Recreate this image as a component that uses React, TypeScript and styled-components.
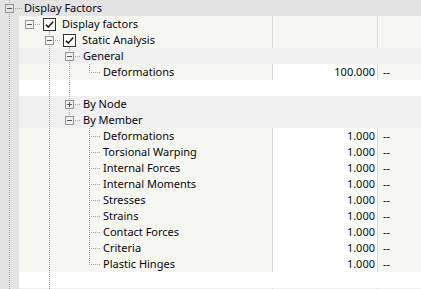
import React from 'react';
import styled, { createGlobalStyle, css } from 'styled-components';

type Variant = 'header' | 'group' | 'band' | 'blank' | 'data' | 'edge';

const DOT = '#a3a3a3';
const STRIP = '#e3e3e3';

const treeBg: Record<Variant, string> = {
  header: '#e3e3e3',
  group: '#f7f7f2',
  band: '#f0f0f0',
  blank: '#ffffff',
  data: '#f7f7f2',
  edge: '#f0f0f0',
};
const valueBg: Record<Variant, string> = {
  header: '#e3e3e3',
  group: '#f7f7f2',
  band: '#f0f0f0',
  blank: '#ffffff',
  data: '#ffffff',
  edge: '#f0f0f0',
};
const dividerBg: Record<Variant, string> = {
  header: '#e3e3e3',
  group: '#d9d9d9',
  band: '#f0f0f0',
  blank: '#ffffff',
  data: '#d9d9d9',
  edge: '#d9d9d9',
};

const vDots = css`
  background-image: linear-gradient(to bottom, ${DOT} 50%, transparent 50%);
  background-size: 1px 2px;
`;
const hDots = css`
  background-image: linear-gradient(to right, ${DOT} 50%, transparent 50%);
  background-size: 2px 1px;
`;

const Global = createGlobalStyle`
  html, body { margin: 0; padding: 0; background: #ffffff; }
  body { font-family: "Segoe UI", "Noto Sans", "Liberation Sans", sans-serif; }
`;

const Frame = styled.div`
  width: 421px;
  height: 289px;
  overflow: hidden;
  background: #ffffff;
  display: flex;
  flex-direction: column;
  font-size: 11px;
  color: #05050f;
`;

const Row = styled.div`
  display: grid;
  grid-template-columns: 272px 1px 104px 1px 43px;
  height: 16px;
  flex: none;
`;

const TreeCell = styled.div<{ $v: Variant }>`
  display: flex;
  align-items: stretch;
  background: ${(p) => treeBg[p.$v]};
  overflow: hidden;
`;

const Divider = styled.div<{ $v: Variant }>`
  background: ${(p) => dividerBg[p.$v]};
`;

const ValueCell = styled.div<{ $v: Variant }>`
  background: ${(p) => valueBg[p.$v]};
  text-align: right;
  padding-right: 2px;
  line-height: 16px;
  white-space: nowrap;
`;

const UnitCell = styled.div<{ $v: Variant }>`
  background: ${(p) => treeBg[p.$v]};
  padding-left: 5px;
  line-height: 16px;
  white-space: nowrap;
`;

const Guide = styled.span<{ $root?: boolean; $line: boolean }>`
  flex: none;
  position: relative;
  width: ${(p) => (p.$root ? 19 : 20)}px;
  background: ${(p) => (p.$root ? STRIP : 'transparent')};
  ${(p) =>
    p.$line &&
    css`
      &::before {
        content: '';
        position: absolute;
        top: 0;
        bottom: 0;
        left: ${p.$root ? 9 : 10}px;
        width: 1px;
        ${vDots}
      }
    `}
`;

const NodeCell = styled.span<{ $root?: boolean; $top?: boolean; $bottom?: boolean }>`
  flex: none;
  position: relative;
  box-sizing: border-box;
  width: 24px;
  display: flex;
  align-items: flex-start;
  padding-left: ${(p) => (p.$root ? 5 : 6)}px;
  &::before {
    content: '';
    position: absolute;
    left: ${(p) => (p.$root ? 9 : 10)}px;
    width: 1px;
    top: ${(p) => (p.$top ? 0 : 8)}px;
    bottom: ${(p) => (p.$bottom ? 0 : 8)}px;
    ${vDots}
  }
  &::after {
    content: '';
    position: absolute;
    top: 8px;
    left: ${(p) => (p.$root ? 9 : 10)}px;
    right: 2px;
    height: 1px;
    ${hDots}
  }
`;

const Expander = styled.span<{ $open: boolean; $bg: string }>`
  position: relative;
  z-index: 1;
  box-sizing: border-box;
  width: 9px;
  height: 9px;
  margin-top: 4px;
  border: 1px solid #939393;
  background: ${(p) => p.$bg};
  &::before {
    content: '';
    position: absolute;
    left: 1px;
    top: 3px;
    width: 5px;
    height: 1px;
    background: #5a5a5a;
  }
  ${(p) =>
    !p.$open &&
    css`
      &::after {
        content: '';
        position: absolute;
        left: 3px;
        top: 1px;
        width: 1px;
        height: 5px;
        background: #5a5a5a;
      }
    `}
`;

const Check = styled.span<{ $stem?: boolean }>`
  flex: none;
  position: relative;
  box-sizing: border-box;
  width: 13px;
  height: 13px;
  margin: 2px 6px 0 0;
  border: 1px solid #333333;
  background: #ffffff;
  display: flex;
  align-items: center;
  justify-content: center;
  ${(p) =>
    p.$stem &&
    css`
      &::after {
        content: '';
        position: absolute;
        left: 5px;
        top: 12px;
        width: 1px;
        height: 1px;
        ${vDots}
      }
    `}
`;

const Label = styled.span`
  line-height: 16px;
  white-space: nowrap;
`;

type Item = {
  v: Variant;
  guides: boolean[];
  node?: {
    top?: boolean;
    bottom?: boolean;
    expander?: 'minus' | 'plus';
    check?: boolean;
    stem?: boolean;
  };
  label?: string;
  value?: string;
  unit?: string;
};

const memberLabels = [
  'Deformations',
  'Torsional Warping',
  'Internal Forces',
  'Internal Moments',
  'Stresses',
  'Strains',
  'Contact Forces',
  'Criteria',
  'Plastic Hinges',
];

const rows: Item[] = [
  { v: 'header', guides: [], node: { top: true, bottom: true, expander: 'minus' }, label: 'Display Factors' },
  { v: 'group', guides: [true], node: { expander: 'minus', check: true, stem: true }, label: 'Display factors' },
  {
    v: 'group',
    guides: [true, false],
    node: { top: true, bottom: true, expander: 'minus', check: true, stem: true },
    label: 'Static Analysis',
  },
  { v: 'band', guides: [true, false, true], node: { top: true, bottom: true, expander: 'minus' }, label: 'General' },
  {
    v: 'data',
    guides: [true, false, true, true],
    node: { top: true },
    label: 'Deformations',
    value: '100.000',
    unit: '--',
  },
  { v: 'blank', guides: [true, false, true, true] },
  { v: 'band', guides: [true, false, true], node: { top: true, bottom: true, expander: 'plus' }, label: 'By Node' },
  { v: 'band', guides: [true, false, true], node: { top: true, expander: 'minus' }, label: 'By Member' },
  ...memberLabels.map(
    (label, i): Item => ({
      v: 'data',
      guides: [true, false, true, false],
      node: { top: true, bottom: i < memberLabels.length - 1 },
      label,
      value: '1.000',
      unit: '--',
    })
  ),
  { v: 'blank', guides: [true, false, true] },
  { v: 'edge', guides: [true, false, true] },
];

const CheckMark = () => (
  <svg width="11" height="11" viewBox="0 0 11 11">
    <path d="M1.8 5.6 L4.3 8.1 L9.3 2.6" fill="none" stroke="#222" strokeWidth="1.5" />
  </svg>
);

const TreeRow: React.FC<{ item: Item }> = ({ item }) => {
  const { v, guides, node, label, value, unit } = item;
  const root = guides.length === 0;
  return (
    <Row>
      <TreeCell $v={v}>
        {guides.map((g, i) => (
          <Guide key={i} $root={i === 0} $line={g} />
        ))}
        {node && (
          <NodeCell $root={root} $top={node.top} $bottom={node.bottom}>
            {node.expander && <Expander $open={node.expander === 'minus'} $bg={treeBg[v]} />}
          </NodeCell>
        )}
        {node?.check && (
          <Check $stem={node.stem}>
            <CheckMark />
          </Check>
        )}
        {label && <Label>{label}</Label>}
      </TreeCell>
      <Divider $v={v} />
      <ValueCell $v={v}>{value}</ValueCell>
      <Divider $v={v} />
      <UnitCell $v={v}>{unit}</UnitCell>
    </Row>
  );
};

export default function App() {
  return (
    <>
      <Global />
      <Frame>
        {rows.map((r, i) => (
          <TreeRow key={i} item={r} />
        ))}
      </Frame>
    </>
  );
}
